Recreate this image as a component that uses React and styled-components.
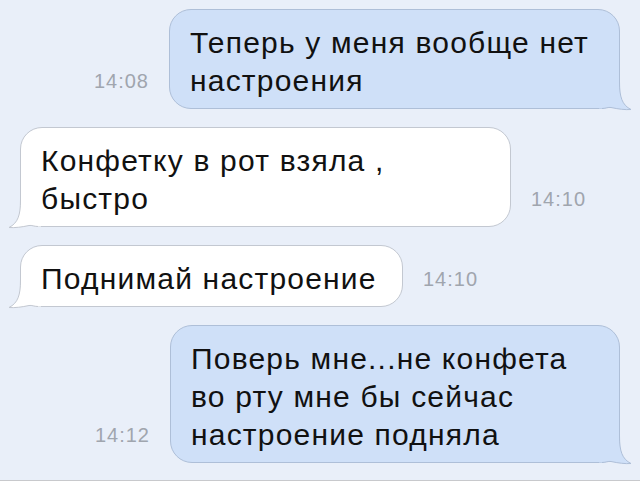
import React from 'react'
import styled, { createGlobalStyle } from 'styled-components'

const GlobalStyle = createGlobalStyle`
  html, body {
    margin: 0;
    padding: 0;
    background: #e9eff9;
  }
  body {
    font-family: "Liberation Sans", Arial, sans-serif;
  }
`

const messages = [
  { id: 1, side: 'out', time: '14:08', width: 451, text: 'Теперь у меня вообще нет\nнастроения' },
  { id: 2, side: 'in', time: '14:10', width: 491, text: 'Конфетку в рот взяла ,\nбыстро' },
  { id: 3, side: 'in', time: '14:10', width: 383, text: 'Поднимай настроение' },
  { id: 4, side: 'out', time: '14:12', width: 450, text: 'Поверь мне...не конфета\nво рту мне бы сейчас\nнастроение подняла' },
]

const palette = {
  out: { fill: '#cfe0f8', stroke: '#aebfd8' },
  in: { fill: '#ffffff', stroke: '#c3c8d1' },
}

const Tail = ({ side }) => (
  <TailSvg $side={side} width="38" height="29" viewBox="0 0 38 29">
    <path
      d="M 23.5 0 C 23.5 15 26 23 35 27.5 C 29 28 22 27 15 25.5 C 12 25 10 26.5 6 26.5 L 3 26.5 L 3 0 Z"
      fill={palette[side].fill}
    />
    <path
      d="M 23.5 0 C 23.5 15 26 23 35 27.5 C 29 28 22 27 15 25.5 C 12 25 10 26.5 6 26.5"
      fill="none"
      stroke={palette[side].stroke}
    />
  </TailSvg>
)

const App = () => {
  return (
    <Screen>
      <GlobalStyle />
      <Chat>
        {messages.map((m) => (
          <Row key={m.id} $side={m.side}>
            {m.side === 'out' && <Time>{m.time}</Time>}
            <Bubble $side={m.side} $width={m.width}>
              <Tail side={m.side} />
              <Text>{m.text}</Text>
            </Bubble>
            {m.side === 'in' && <Time>{m.time}</Time>}
          </Row>
        ))}
      </Chat>
      <Footer />
    </Screen>
  )
}

export default App

const Screen = styled.div`
  width: 640px;
  height: 484px;
  display: flex;
  flex-direction: column;
  overflow: hidden;
  background: #e9eff9;
`

const Chat = styled.div`
  flex: 1;
  display: flex;
  flex-direction: column;
  gap: 18px;
  padding: 9px 20px 0;
`

const Row = styled.div`
  display: flex;
  align-items: flex-end;
  justify-content: ${(p) => (p.$side === 'out' ? 'flex-end' : 'flex-start')};
  gap: 20px;
`

const Bubble = styled.div`
  position: relative;
  box-sizing: border-box;
  width: ${(p) => p.$width}px;
  padding: 14px 20px 8px;
  background: ${(p) => palette[p.$side].fill};
  border: 1px solid ${(p) => palette[p.$side].stroke};
  border-radius: 22px;
  border-bottom-right-radius: ${(p) => (p.$side === 'out' ? '20px' : '22px')};
  border-bottom-left-radius: ${(p) => (p.$side === 'in' ? '20px' : '22px')};
`

const TailSvg = styled.svg`
  position: absolute;
  bottom: -3px;
  ${(p) => (p.$side === 'out' ? 'right: -15px;' : 'left: -15px; transform: scaleX(-1);')}
  overflow: visible;
`

const Text = styled.div`
  position: relative;
  font-size: 30px;
  line-height: 38px;
  letter-spacing: 1.2px;
  color: #111111;
  white-space: pre;
`

const Time = styled.div`
  font-size: 20px;
  line-height: 20px;
  letter-spacing: 1px;
  color: #a0a5ae;
  margin-bottom: 18px;
`

const Footer = styled.div`
  height: 3px;
  border-top: 1px solid #c8c9cc;
  background: #ffffff;
`
